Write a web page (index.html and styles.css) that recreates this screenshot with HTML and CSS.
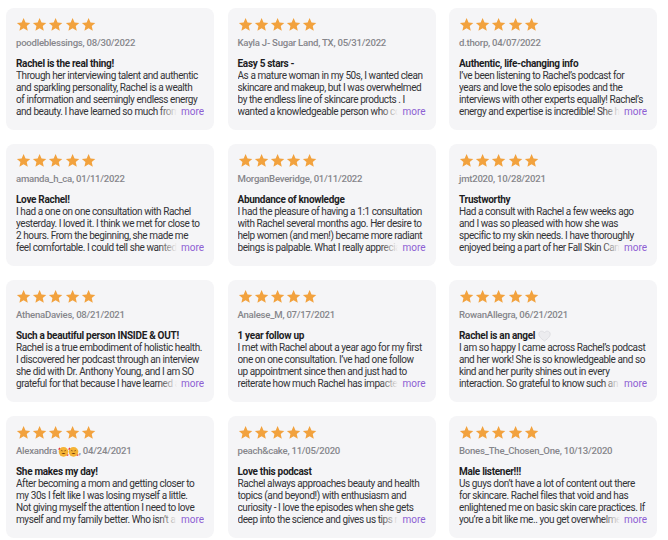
FILE: index.html
```html
<!DOCTYPE html>
<html lang="en">
<head>
<meta charset="utf-8">
<title>Reviews</title>
<link rel="stylesheet" href="styles.css">
</head>
<body>
<svg width="0" height="0" class="defs" aria-hidden="true">
  <defs>
    <symbol id="star" viewBox="0 0 24 24"><path d="M12 1.6l3.1 6.9 7.5.8-5.6 5.1 1.6 7.4L12 17.9l-6.6 3.9 1.6-7.4-5.6-5.1 7.5-.8z"/></symbol>
  </defs>
</svg>
<main class="grid">

  <article class="card">
    <div class="stars"><svg><use href="#star"/></svg><svg><use href="#star"/></svg><svg><use href="#star"/></svg><svg><use href="#star"/></svg><svg><use href="#star"/></svg></div>
    <div class="author">poodleblessings, 08/30/2022</div>
    <h3 class="title">Rachel is the real thing!</h3>
    <div class="body"><p>Through her interviewing talent and authentic and sparkling personality, Rachel is a wealth of&nbsp;information and seemingly endless energy and beauty. I have learned so much from her podcast and I am grateful for every episode she shares.</p><span class="more">more</span></div>
  </article>

  <article class="card">
    <div class="stars"><svg><use href="#star"/></svg><svg><use href="#star"/></svg><svg><use href="#star"/></svg><svg><use href="#star"/></svg><svg><use href="#star"/></svg></div>
    <div class="author">Kayla J- Sugar Land, TX, 05/31/2022</div>
    <h3 class="title">Easy 5 stars -</h3>
    <div class="body"><p>As a mature woman in my 50s, I wanted clean skincare and makeup, but I was overwhelmed by the endless line of skincare products . I wanted a knowledgeable person who could guide me through all of it.</p><span class="more">more</span></div>
  </article>

  <article class="card">
    <div class="stars"><svg><use href="#star"/></svg><svg><use href="#star"/></svg><svg><use href="#star"/></svg><svg><use href="#star"/></svg><svg><use href="#star"/></svg></div>
    <div class="author">d.thorp, 04/07/2022</div>
    <h3 class="title">Authentic, life-changing info</h3>
    <div class="body"><p>I’ve been listening to Rachel’s podcast for years and love the solo episodes and the interviews with other experts equally! Rachel’s energy and expertise is incredible! She has changed the way I live.</p><span class="more">more</span></div>
  </article>

  <article class="card">
    <div class="stars"><svg><use href="#star"/></svg><svg><use href="#star"/></svg><svg><use href="#star"/></svg><svg><use href="#star"/></svg><svg><use href="#star"/></svg></div>
    <div class="author">amanda_h_ca, 01/11/2022</div>
    <h3 class="title">Love Rachel!</h3>
    <div class="body"><p>I had a one on one consultation with Rachel yesterday. I loved it. I think we met for close to 2 hours. From the beginning, she made me feel comfortable. I could tell she wanted to really help me.</p><span class="more">more</span></div>
  </article>

  <article class="card">
    <div class="stars"><svg><use href="#star"/></svg><svg><use href="#star"/></svg><svg><use href="#star"/></svg><svg><use href="#star"/></svg><svg><use href="#star"/></svg></div>
    <div class="author">MorganBeveridge, 01/11/2022</div>
    <h3 class="title">Abundance of knowledge</h3>
    <div class="body"><p>I had the pleasure of having a 1:1 consultation with Rachel several months ago. Her desire to help women (and men!) became more radiant beings is palpable. What I really appreciate is her honesty.</p><span class="more">more</span></div>
  </article>

  <article class="card">
    <div class="stars"><svg><use href="#star"/></svg><svg><use href="#star"/></svg><svg><use href="#star"/></svg><svg><use href="#star"/></svg><svg><use href="#star"/></svg></div>
    <div class="author">jmt2020, 10/28/2021</div>
    <h3 class="title">Trustworthy</h3>
    <div class="body"><p>Had a consult with Rachel a few weeks ago and I was so pleased with how she was specific to my skin needs. I have thoroughly enjoyed being a part of her Fall Skin Camp this year.</p><span class="more">more</span></div>
  </article>

  <article class="card">
    <div class="stars"><svg><use href="#star"/></svg><svg><use href="#star"/></svg><svg><use href="#star"/></svg><svg><use href="#star"/></svg><svg><use href="#star"/></svg></div>
    <div class="author">AthenaDavies, 08/21/2021</div>
    <h3 class="title">Such a beautiful person INSIDE &amp; OUT!</h3>
    <div class="body"><p>Rachel is a true embodiment of holistic health. I discovered her podcast through an interview she did with Dr. Anthony Young, and I am SO grateful for that because I have learned a great deal.</p><span class="more">more</span></div>
  </article>

  <article class="card">
    <div class="stars"><svg><use href="#star"/></svg><svg><use href="#star"/></svg><svg><use href="#star"/></svg><svg><use href="#star"/></svg><svg><use href="#star"/></svg></div>
    <div class="author">Analese_M, 07/17/2021</div>
    <h3 class="title">1 year follow up</h3>
    <div class="body"><p>I met with Rachel about a year ago for my first one on one consultation. I’ve had one follow up appointment since then and just had to reiterate how much Rachel has impacted my life.</p><span class="more">more</span></div>
  </article>

  <article class="card">
    <div class="stars"><svg><use href="#star"/></svg><svg><use href="#star"/></svg><svg><use href="#star"/></svg><svg><use href="#star"/></svg><svg><use href="#star"/></svg></div>
    <div class="author">RowanAllegra, 06/21/2021</div>
    <h3 class="title">Rachel is an angel <svg class="heart" viewBox="0 0 16 14"><path d="M8 13.2C3.4 9.9 1 7.4 1 4.6 1 2.6 2.6 1 4.5 1c1.4 0 2.7.8 3.5 2 .8-1.2 2.1-2 3.5-2C13.4 1 15 2.6 15 4.6c0 2.8-2.4 5.3-7 8.6z"/></svg></h3>
    <div class="body"><p>I am so happy I came across Rachel’s podcast and her work! She is so knowledgeable and so kind and her purity shines out in every interaction. So grateful to know such an amazing soul.</p><span class="more">more</span></div>
  </article>

  <article class="card">
    <div class="stars"><svg><use href="#star"/></svg><svg><use href="#star"/></svg><svg><use href="#star"/></svg><svg><use href="#star"/></svg><svg><use href="#star"/></svg></div>
    <div class="author">Alexandra<svg class="emoji" viewBox="0 0 16 16"><circle cx="8" cy="8.5" r="7" fill="#f5b335"/><path d="M4.3 7.2q1.2-1.4 2.4 0M9.3 7.2q1.2-1.4 2.4 0" stroke="#6b3a10" stroke-width="1" fill="none"/><path d="M5 10q3 3 6 0z" fill="#6b3a10"/><path d="M1.2 3.2c.9-1 2.3-.3 2 .9-.3 1-2 1.8-2 1.8s-1.2-1.7 0-2.7zM13.5 12.2c1-.6 2.2.3 1.6 1.3-.4.8-2.1 1.1-2.1 1.1s-.6-1.9.5-2.4z" fill="#e53a3a"/></svg><svg class="emoji" viewBox="0 0 16 16"><circle cx="8" cy="8.5" r="7" fill="#f5b335"/><path d="M4.3 7.2q1.2-1.4 2.4 0M9.3 7.2q1.2-1.4 2.4 0" stroke="#6b3a10" stroke-width="1" fill="none"/><path d="M5 10q3 3 6 0z" fill="#6b3a10"/><path d="M1.2 3.2c.9-1 2.3-.3 2 .9-.3 1-2 1.8-2 1.8s-1.2-1.7 0-2.7zM13.5 12.2c1-.6 2.2.3 1.6 1.3-.4.8-2.1 1.1-2.1 1.1s-.6-1.9.5-2.4z" fill="#e53a3a"/></svg>, 04/24/2021</div>
    <h3 class="title">She makes my day!</h3>
    <div class="body"><p>After becoming a mom and getting closer to my 30s I felt like I was losing myself a little. Not giving myself the attention I need to love myself and my family better. Who isn’t a little lost at times?</p><span class="more">more</span></div>
  </article>

  <article class="card">
    <div class="stars"><svg><use href="#star"/></svg><svg><use href="#star"/></svg><svg><use href="#star"/></svg><svg><use href="#star"/></svg><svg><use href="#star"/></svg></div>
    <div class="author">peach&amp;cake, 11/05/2020</div>
    <h3 class="title">Love this podcast</h3>
    <div class="body"><p>Rachel always approaches beauty and health topics (and beyond!) with enthusiasm and curiosity - I love the episodes when she gets deep into the science and gives us tips right away.</p><span class="more">more</span></div>
  </article>

  <article class="card">
    <div class="stars"><svg><use href="#star"/></svg><svg><use href="#star"/></svg><svg><use href="#star"/></svg><svg><use href="#star"/></svg><svg><use href="#star"/></svg></div>
    <div class="author">Bones_The_Chosen_One, 10/13/2020</div>
    <h3 class="title">Male listener!!!</h3>
    <div class="body"><p>Us guys don’t have a lot of content out there for skincare. Rachel files that void and has enlightened me on basic skin care practices. If you’re a bit like me.. you get overwhelmed easily.</p><span class="more">more</span></div>
  </article>

</main>
</body>
</html>
```

FILE: styles.css
```css
* { box-sizing: border-box; }

html, body {
  margin: 0;
  background: #ffffff;
}

body {
  font-family: Roboto, "Liberation Sans", sans-serif;
  color: #1d1d1f;
  -webkit-font-smoothing: antialiased;
}

.defs {
  position: absolute;
  width: 0;
  height: 0;
}

.grid {
  display: grid;
  grid-template-columns: repeat(3, 208px);
  column-gap: 13.5px;
  row-gap: 14px;
  padding: 8px 0 0 6px;
}

.card {
  background: #f5f5f7;
  border-radius: 8px;
  padding: 9px 10px 11px 10px;
  height: 122px;
}

.stars {
  display: flex;
  gap: 1px;
  height: 16px;
}

.stars svg {
  width: 15.2px;
  height: 15.2px;
  fill: #f2a23e;
}

.author {
  margin-top: 3px;
  font-size: 9.6px;
  line-height: 14px;
  font-weight: 500;
  letter-spacing: -0.25px;
  color: #86868b;
  display: flex;
  align-items: center;
  white-space: nowrap;
}

.emoji {
  width: 11px;
  height: 11px;
  margin-left: 1px;
}

.emoji + .emoji {
  margin-left: -1px;
}

.title {
  margin: 8px 0 0 0;
  font-size: 10px;
  line-height: 12px;
  font-weight: 700;
  letter-spacing: -0.3px;
  color: #1d1d1f;
  display: flex;
  align-items: center;
  gap: 3px;
}

.heart {
  width: 13px;
  height: 12px;
  fill: #ececef;
  stroke: #d6d6da;
  stroke-width: 0.8;
}

.body {
  position: relative;
  height: 48px;
  overflow: hidden;
  font-size: 10px;
  line-height: 12px;
  letter-spacing: -0.42px;
  color: #333336;
}

.body p {
  margin: 0;
}

.more {
  position: absolute;
  right: 0;
  bottom: 0;
  line-height: 12px;
  letter-spacing: 0;
  padding-left: 22px;
  color: #8d5fd3;
  background: linear-gradient(to right, rgba(245,245,247,0) 0, #f5f5f7 18px);
}
```
